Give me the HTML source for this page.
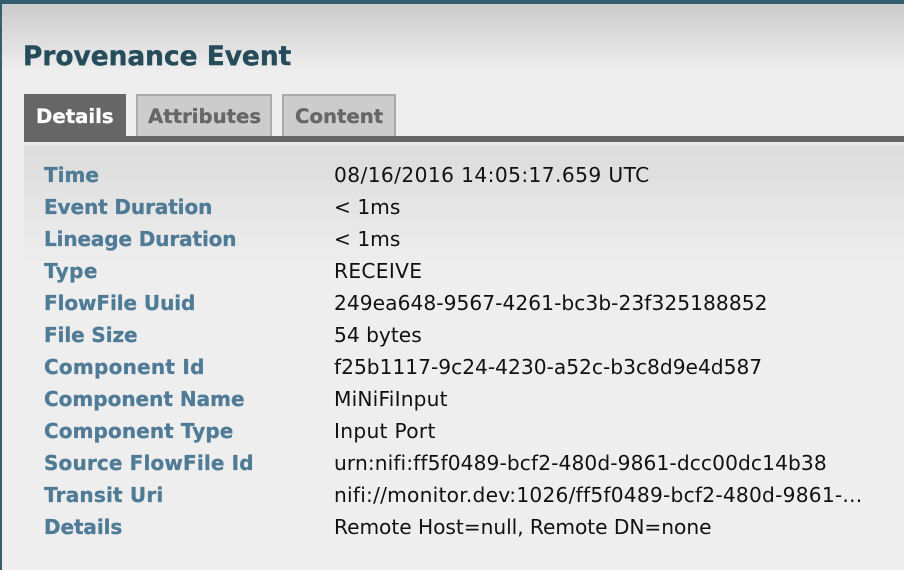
<!DOCTYPE html>
<html><head><meta charset="utf-8">
<style>
html,body{margin:0;padding:0}
body{width:904px;height:570px;position:relative;overflow:hidden;background:#eee;font-family:"DejaVu Sans","Liberation Sans",sans-serif}
.a{position:absolute;white-space:nowrap}
.top{left:0;top:0;width:904px;height:4px;background:#355f6f}
.left{left:0;top:0;width:2px;height:570px;background:#355f6f}
.hdr{left:2px;top:4px;width:902px;height:68px;background:linear-gradient(#cbcbcb,#eee)}
.title{left:23px;top:40px;font-size:26.4px;line-height:34px;font-weight:bold;color:#264c5c;-webkit-text-stroke:.4px #264c5c}
.tabbar{left:24px;top:136px;width:880px;height:6px;background:#666}
.tab{top:94px;height:42px;box-sizing:border-box}
.off{background:#ccc;border:2px solid #aaa;border-bottom:0}
.tt{top:105px;font-size:19.7px;line-height:24px;font-weight:bold;color:#666;-webkit-text-stroke:.3px currentColor}
.panel{left:24px;top:142px;width:880px;height:428px;background:linear-gradient(#eee 0,#ddd 5px,#ddd 14px,#eee 125px)}
.k{left:44px;font-size:20px;line-height:24px;font-weight:bold;color:#4f7b96;-webkit-text-stroke:.3px #4f7b96}
.v{left:334px;font-size:20.2px;line-height:24px;color:#111}
</style></head><body>
<div class="a top"></div>
<div class="a hdr"></div>
<div class="a left"></div>
<div class="a title">Provenance Event</div>
<div class="a panel"></div>
<div class="a tabbar"></div>
<div class="a tab" style="left:24px;width:102px;background:#666"></div>
<div class="a tab off" style="left:136px;width:136px"></div>
<div class="a tab off" style="left:282px;width:114px"></div>
<div class="a tt" style="left:36px;color:#fff">Details</div>
<div class="a tt" style="left:148px">Attributes</div>
<div class="a tt" style="left:295px">Content</div>

<div class="a k" style="top:163px">Time</div><div class="a v" style="top:163px;letter-spacing:.4px">08/16/2016 14:05:17.659 UTC</div>
<div class="a k" style="top:195px;letter-spacing:-.1px">Event Duration</div><div class="a v" style="top:195px">&lt; 1ms</div>
<div class="a k" style="top:227px;letter-spacing:-.12px">Lineage Duration</div><div class="a v" style="top:227px">&lt; 1ms</div>
<div class="a k" style="top:259px;letter-spacing:.4px">Type</div><div class="a v" style="top:259px;letter-spacing:.3px">RECEIVE</div>
<div class="a k" style="top:291px;letter-spacing:-.08px">FlowFile Uuid</div><div class="a v" style="top:291px;letter-spacing:.05px">249ea648-9567-4261-bc3b-23f325188852</div>
<div class="a k" style="top:323px;letter-spacing:-.1px">File Size</div><div class="a v" style="top:323px">54 bytes</div>
<div class="a k" style="top:355px;letter-spacing:.25px">Component Id</div><div class="a v" style="top:355px">f25b1117-9c24-4230-a52c-b3c8d9e4d587</div>
<div class="a k" style="top:387px">Component Name</div><div class="a v" style="top:387px;letter-spacing:.18px">MiNiFiInput</div>
<div class="a k" style="top:419px;letter-spacing:.1px">Component Type</div><div class="a v" style="top:419px;letter-spacing:.3px">Input Port</div>
<div class="a k" style="top:451px;letter-spacing:.15px">Source FlowFile Id</div><div class="a v" style="top:451px;letter-spacing:.1px">urn:nifi:ff5f0489-bcf2-480d-9861-dcc00dc14b38</div>
<div class="a k" style="top:483px;letter-spacing:.2px">Transit Uri</div><div class="a v" style="top:483px;letter-spacing:.23px">nifi://monitor.dev:1026/ff5f0489-bcf2-480d-9861-...</div>
<div class="a k" style="top:515px;letter-spacing:-.1px">Details</div><div class="a v" style="top:515px;letter-spacing:-.05px">Remote Host=null, Remote DN=none</div>
</body></html>
